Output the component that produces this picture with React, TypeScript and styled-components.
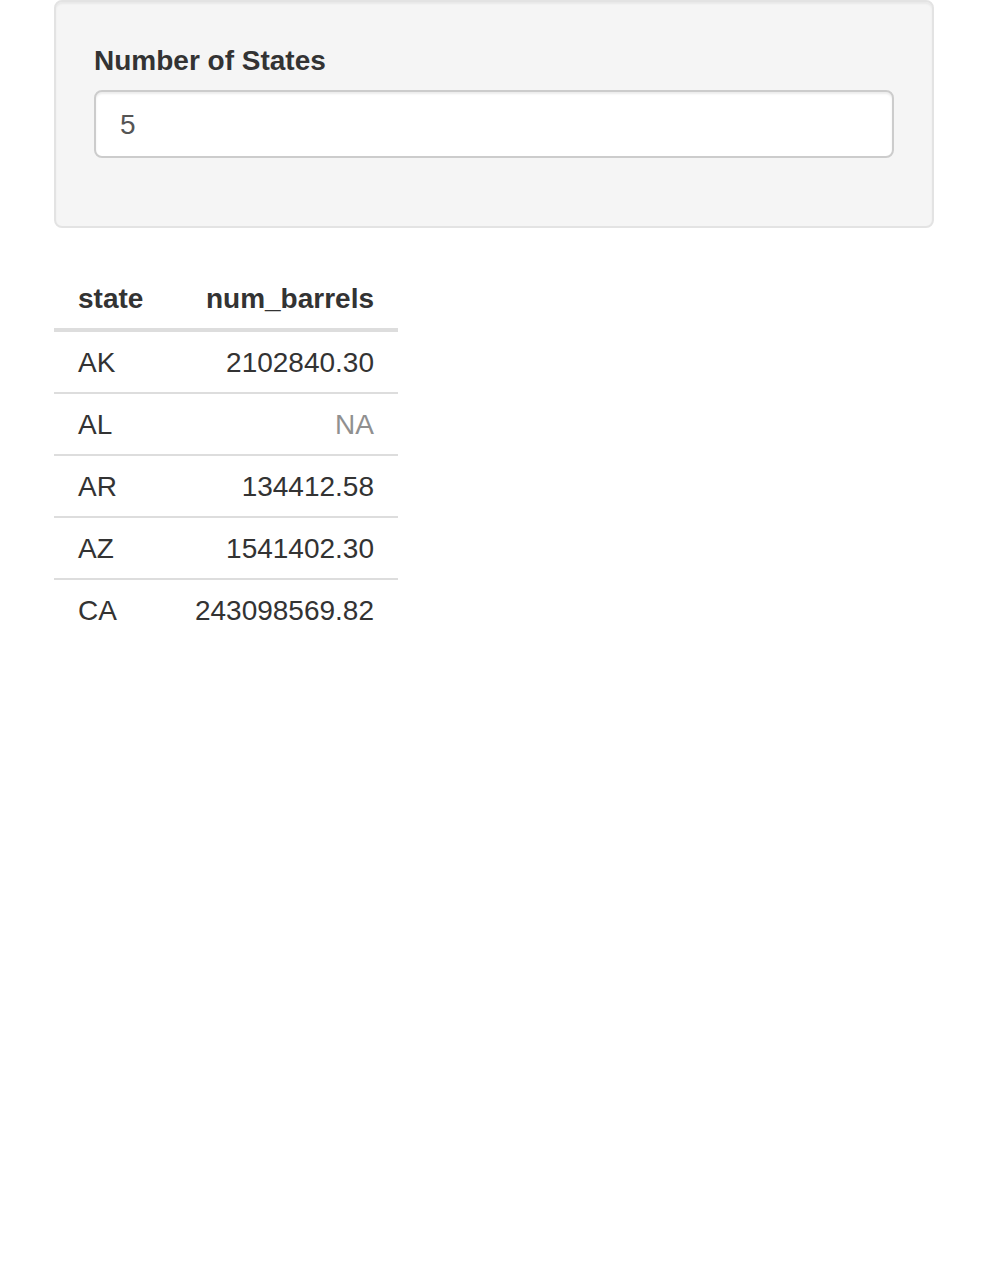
import React, { FC } from 'react'
import styled, { createGlobalStyle } from 'styled-components';

const GlobalStyle = createGlobalStyle`
    html, body {
        margin: 0;
        padding: 0;
        background: #ffffff;
    }
    body {
        font-family: "Liberation Sans", Arial, Helvetica, sans-serif;
        font-size: 28px;
        line-height: 40px;
        color: #333333;
    }
    * {
        box-sizing: border-box;
    }
`;

const Page = styled.div`
    display: flex;
    flex-direction: column;
    padding: 0 54px;
`;

const Well = styled.div`
    background: #f5f5f5;
    border: 2px solid #e3e3e3;
    border-radius: 8px;
    box-shadow: inset 0 2px 2px rgba(0, 0, 0, 0.05);
    padding: 38px;
    margin-bottom: 40px;
`;

const FormGroup = styled.div`
    display: flex;
    flex-direction: column;
    margin-bottom: 30px;
`;

const Label = styled.label`
    font-weight: bold;
    font-size: 28px;
    line-height: 40px;
    padding-top: 1px;
    margin-bottom: 9px;
`;

const NumberInput = styled.input`
    width: 100%;
    height: 68px;
    padding: 13px 24px 11px;
    font-family: inherit;
    font-size: 28px;
    line-height: 40px;
    color: #555555;
    background: #ffffff;
    border: 2px solid #cccccc;
    border-radius: 8px;
    box-shadow: inset 0 2px 2px rgba(0, 0, 0, 0.075);
    outline: none;
    -moz-appearance: textfield;

    &::-webkit-inner-spin-button,
    &::-webkit-outer-spin-button {
        -webkit-appearance: none;
        margin: 0;
    }
`;

const Table = styled.table`
    border-collapse: collapse;
    border-spacing: 0;
    align-self: flex-start;
`;

const HeadCell = styled.th<{ $align?: string; $width: number }>`
    width: ${p => p.$width}px;
    font-weight: bold;
    text-align: ${p => p.$align || 'left'};
    padding: 11px 24px 9px;
    border-bottom: 4px solid #dddddd;
`;

const Cell = styled.td<{ $align?: string; $muted?: boolean; $last?: boolean }>`
    text-align: ${p => p.$align || 'left'};
    color: ${p => p.$muted ? '#909090' : '#333333'};
    padding: 11px 24px 9px;
    border-bottom: ${p => p.$last ? 'none' : '2px solid #dddddd'};
`;

interface IStateRow {
    state: string;
    barrels: string | null;
}

const rows: IStateRow[] = [
    { state: 'AK', barrels: '2102840.30' },
    { state: 'AL', barrels: null },
    { state: 'AR', barrels: '134412.58' },
    { state: 'AZ', barrels: '1541402.30' },
    { state: 'CA', barrels: '243098569.82' },
];

const App: FC = () => {
    return (
        <>
            <GlobalStyle />
            <Page>
                <Well>
                    <FormGroup>
                        <Label htmlFor="n">Number of States</Label>
                        <NumberInput id="n" type="number" defaultValue={5} />
                    </FormGroup>
                </Well>
                <Table>
                    <thead>
                        <tr>
                            <HeadCell $width={116}>state</HeadCell>
                            <HeadCell $width={228} $align="right">num_barrels</HeadCell>
                        </tr>
                    </thead>
                    <tbody>
                        {rows.map((item, i) => {
                            const last = i === rows.length - 1;
                            return (
                                <tr key={item.state}>
                                    <Cell $last={last}>{item.state}</Cell>
                                    <Cell $align="right" $muted={item.barrels === null} $last={last}>
                                        {item.barrels ?? 'NA'}
                                    </Cell>
                                </tr>
                            )
                        })}
                    </tbody>
                </Table>
            </Page>
        </>
    )
}

export default App
